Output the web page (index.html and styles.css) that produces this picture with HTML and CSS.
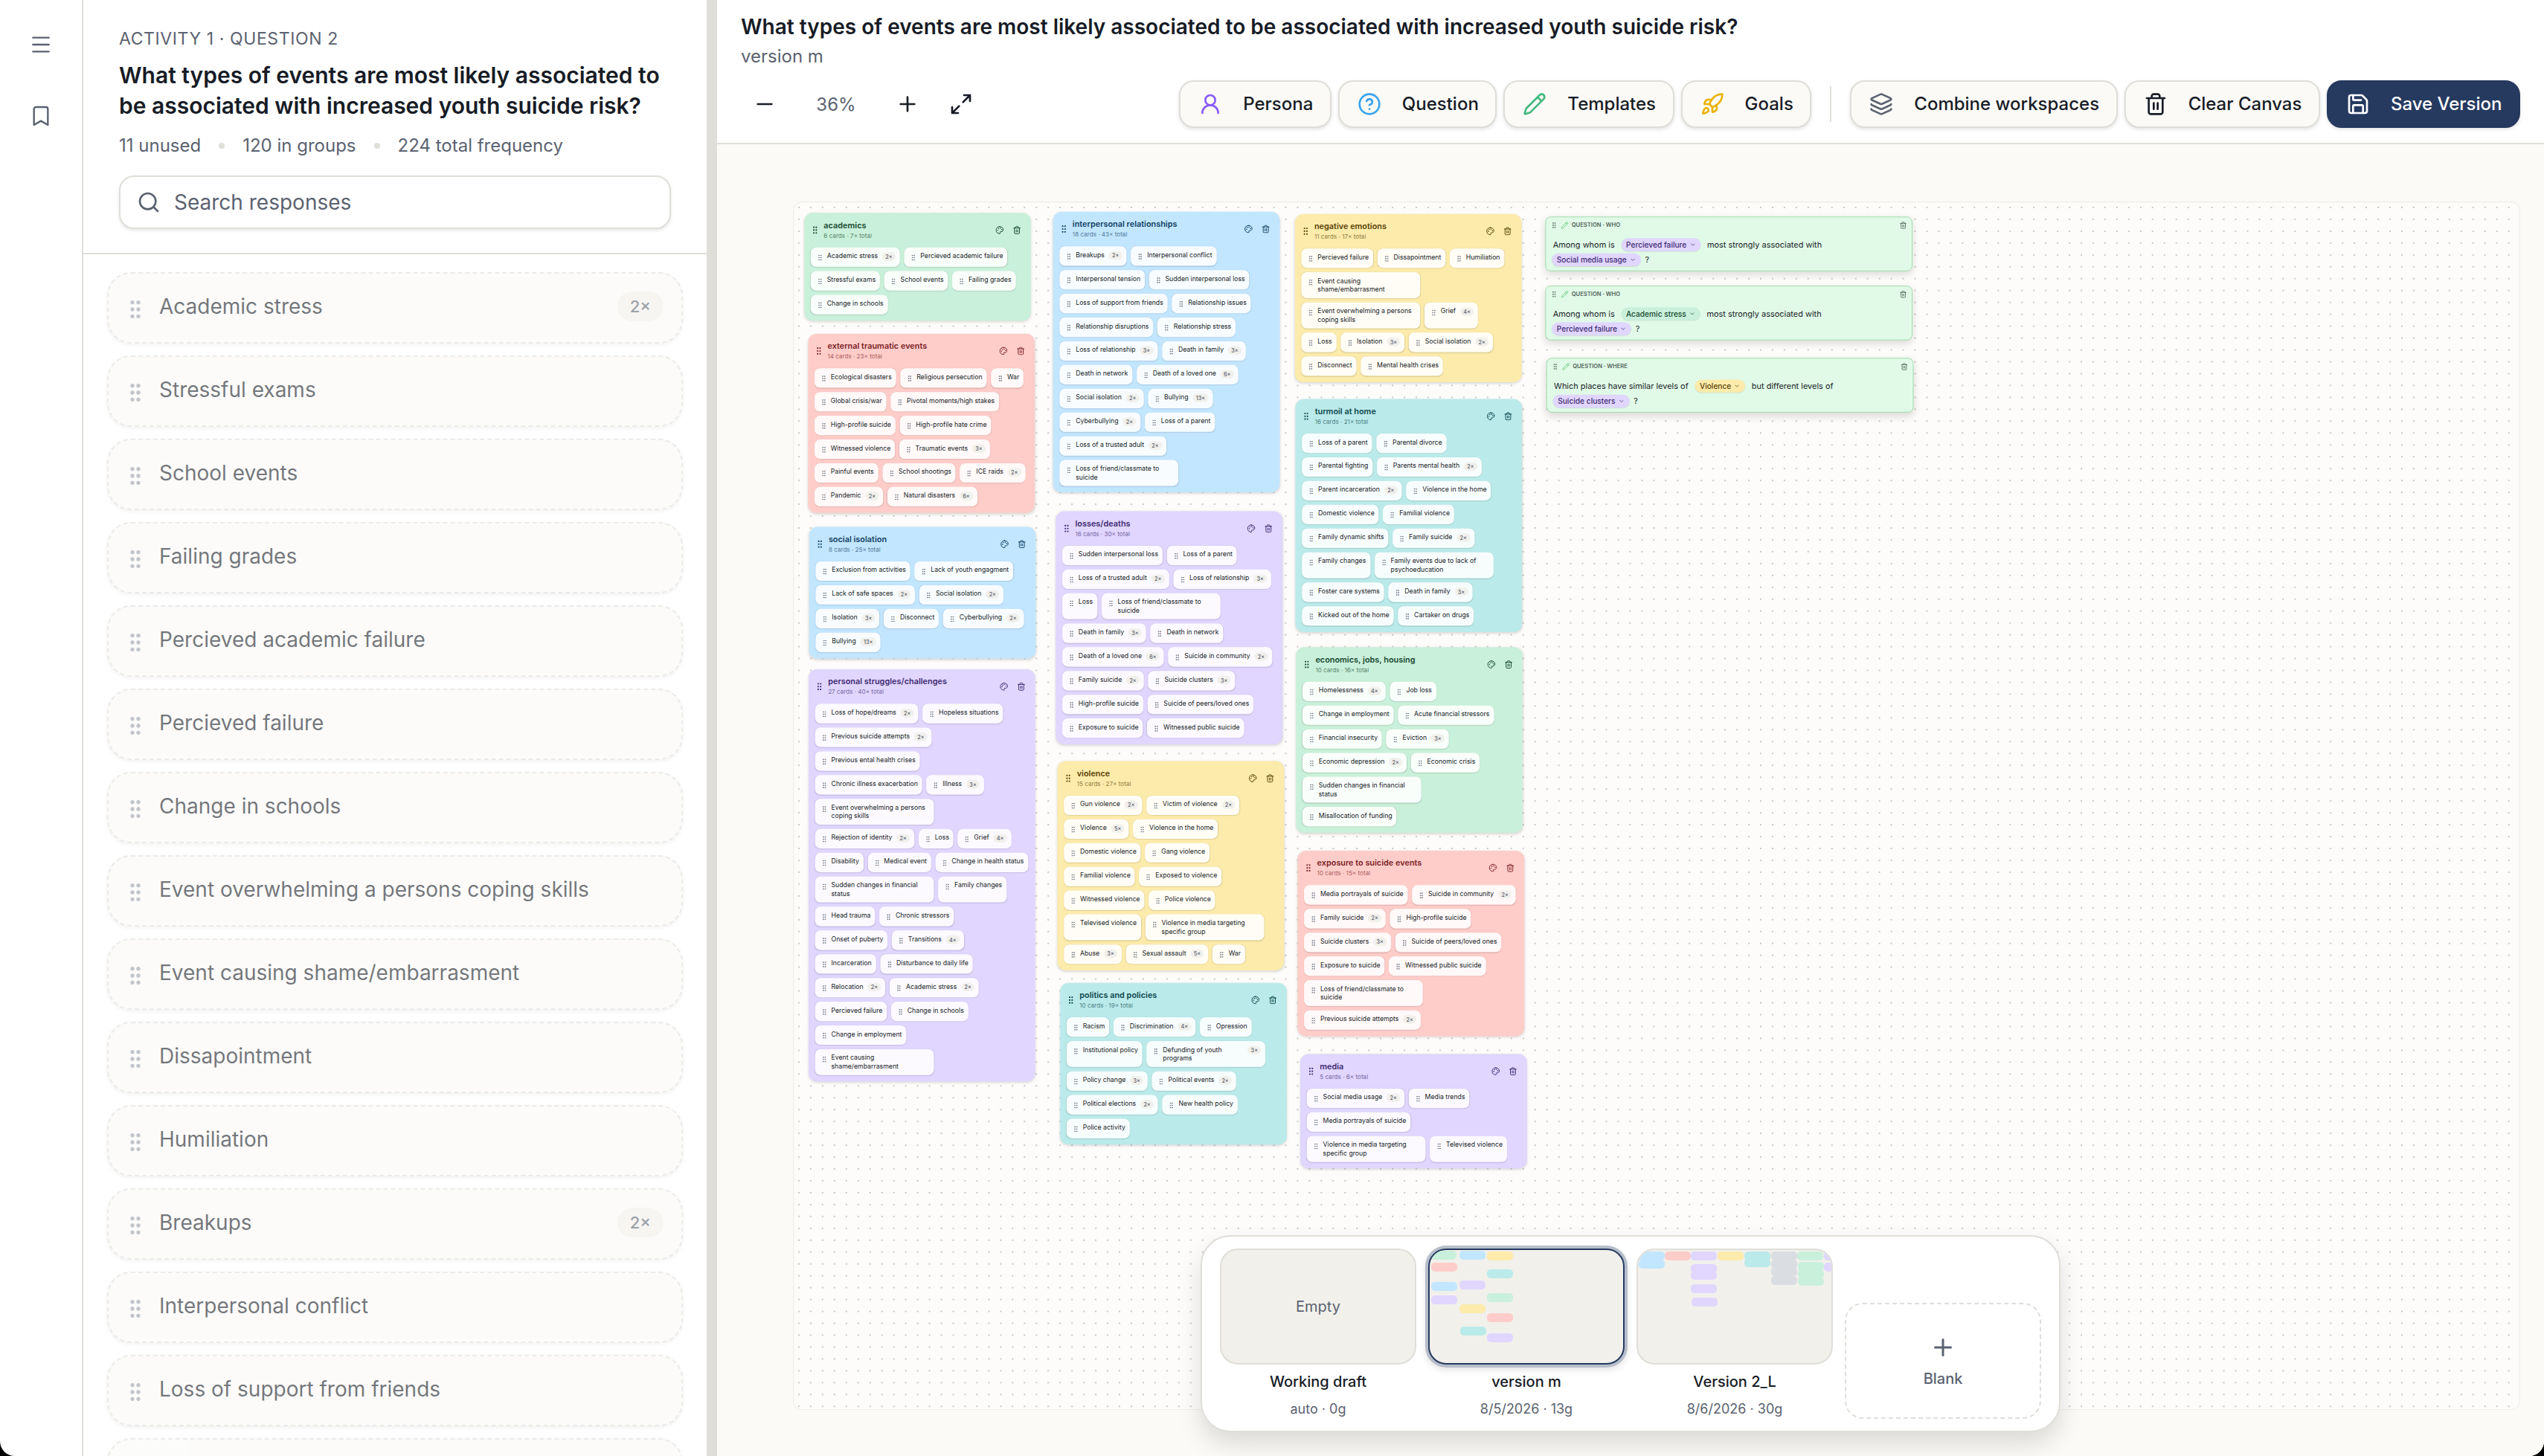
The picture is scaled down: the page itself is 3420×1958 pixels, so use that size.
FILE: index.html
```html
<!DOCTYPE html>
<html lang="en">
<head>
    <meta charset="UTF-8">
    <meta name="viewport" content="width=device-width, initial-scale=1.0">
    <title>Workspace</title>
    <link rel="stylesheet" href="styles.css">
</head>
<body>
    <svg class="sprite">
        <symbol id="menu" viewBox="0 0 24 24"><path d="M4 5h16M4 12h16M4 19h16"/></symbol>
        <symbol id="bookmark" viewBox="0 0 24 24"><path d="m19 21-7-4-7 4V5a2 2 0 0 1 2-2h10a2 2 0 0 1 2 2v16z"/></symbol>
        <symbol id="search" viewBox="0 0 24 24"><circle cx="11" cy="11" r="8"/><path d="m21 21-4.3-4.3"/></symbol>
        <symbol id="grip" viewBox="0 0 24 24"><circle cx="9" cy="5" r="1"/><circle cx="9" cy="12" r="1"/><circle cx="9" cy="19" r="1"/><circle cx="15" cy="5" r="1"/><circle cx="15" cy="12" r="1"/><circle cx="15" cy="19" r="1"/></symbol>
        <symbol id="minus" viewBox="0 0 24 24"><path d="M5 12h14"/></symbol>
        <symbol id="plus" viewBox="0 0 24 24"><path d="M5 12h14M12 5v14"/></symbol>
        <symbol id="expand" viewBox="0 0 24 24"><path d="M15 3h6v6M21 3l-7 7M3 21l7-7M9 21H3v-6"/></symbol>
        <symbol id="user" viewBox="0 0 24 24"><circle cx="12" cy="8" r="5"/><path d="M20 21a8 8 0 0 0-16 0"/></symbol>
        <symbol id="help" viewBox="0 0 24 24"><circle cx="12" cy="12" r="10"/><path d="M9.09 9a3 3 0 0 1 5.83 1c0 2-3 3-3 3M12 17h.01"/></symbol>
        <symbol id="pencil" viewBox="0 0 24 24"><path d="M21.174 6.812a1 1 0 0 0-3.986-3.987L3.842 16.174a2 2 0 0 0-.5.83l-1.321 4.352a.5.5 0 0 0 .623.622l4.353-1.32a2 2 0 0 0 .83-.497zM15 5l4 4"/></symbol>
        <symbol id="rocket" viewBox="0 0 24 24"><path d="M4.5 16.5c-1.5 1.26-2 5-2 5s3.74-.5 5-2c.71-.84.7-2.13-.09-2.91a2.18 2.18 0 0 0-2.91-.09z"/><path d="m12 15-3-3a22 22 0 0 1 2-3.95A12.88 12.88 0 0 1 22 2c0 2.72-.78 7.5-6 11a22.35 22.35 0 0 1-4 2z"/><path d="M9 12H4s.55-3.03 2-4c1.62-1.08 5 0 5 0M12 15v5s3.03-.55 4-2c1.08-1.62 0-5 0-5"/></symbol>
        <symbol id="layers" viewBox="0 0 24 24"><path d="M12.83 2.18a2 2 0 0 0-1.66 0L2.6 6.08a1 1 0 0 0 0 1.83l8.58 3.91a2 2 0 0 0 1.66 0l8.58-3.9a1 1 0 0 0 0-1.83z"/><path d="M2 12a1 1 0 0 0 .58.91l8.6 3.91a2 2 0 0 0 1.65 0l8.58-3.9A1 1 0 0 0 22 12"/><path d="M2 17a1 1 0 0 0 .58.91l8.6 3.91a2 2 0 0 0 1.65 0l8.58-3.9A1 1 0 0 0 22 17"/></symbol>
        <symbol id="trash" viewBox="0 0 24 24"><path d="M3 6h18M19 6v14c0 1-1 2-2 2H7c-1 0-2-1-2-2V6M8 6V4c0-1 1-2 2-2h4c1 0 2 1 2 2v2M10 11v6M14 11v6"/></symbol>
        <symbol id="save" viewBox="0 0 24 24"><path d="M15.2 3a2 2 0 0 1 1.4.6l3.8 3.8a2 2 0 0 1 .6 1.4V19a2 2 0 0 1-2 2H5a2 2 0 0 1-2-2V5a2 2 0 0 1 2-2z"/><path d="M17 21v-7a1 1 0 0 0-1-1H8a1 1 0 0 0-1 1v7M7 3v4a1 1 0 0 0 1 1h7"/></symbol>
        <symbol id="palette" viewBox="0 0 24 24"><circle cx="13.5" cy="6.5" r=".5"/><circle cx="17.5" cy="10.5" r=".5"/><circle cx="8.5" cy="7.5" r=".5"/><circle cx="6.5" cy="12.5" r=".5"/><path d="M12 2C6.5 2 2 6.5 2 12s4.5 10 10 10c.926 0 1.648-.746 1.648-1.688 0-.437-.18-.835-.437-1.125-.29-.289-.438-.652-.438-1.125a1.64 1.64 0 0 1 1.668-1.668h1.996c3.051 0 5.555-2.503 5.555-5.554C21.965 6.012 17.461 2 12 2z"/></symbol>
        <symbol id="chevron" viewBox="0 0 24 24"><path d="m6 9 6 6 6-6"/></symbol>
    </svg>

    <div class="app">
        <nav class="rail">
            <svg class="icon"><use href="#menu"/></svg>
            <svg class="icon"><use href="#bookmark"/></svg>
        </nav>

        <aside class="panel">
            <div class="panel-head">
                <p class="eyebrow">ACTIVITY 1 · QUESTION 2</p>
                <h2>What types of events are most likely associated to be associated with increased youth suicide risk?</h2>
                <p class="stats"><span>11 unused</span><i></i><span>120 in groups</span><i></i><span>224 total frequency</span></p>
                <div class="search"><svg class="icon"><use href="#search"/></svg>Search responses</div>
            </div>
            <div class="responses"></div>
        </aside>
        <div class="divider"></div>

        <main class="main">
            <header class="topbar">
                <h1>What types of events are most likely associated to be associated with increased youth suicide risk?</h1>
                <p class="version">version m</p>
                <div class="toolbar">
                    <div class="zoom">
                        <button><svg class="icon"><use href="#minus"/></svg></button>
                        <span>36%</span>
                        <button><svg class="icon"><use href="#plus"/></svg></button>
                        <button><svg class="icon"><use href="#expand"/></svg></button>
                    </div>
                    <div class="actions">
                        <button class="btn"><svg class="icon violet"><use href="#user"/></svg>Persona</button>
                        <button class="btn"><svg class="icon azure"><use href="#help"/></svg>Question</button>
                        <button class="btn"><svg class="icon emerald"><use href="#pencil"/></svg>Templates</button>
                        <button class="btn"><svg class="icon amber"><use href="#rocket"/></svg>Goals</button>
                        <span class="sep"></span>
                        <button class="btn"><svg class="icon slate"><use href="#layers"/></svg>Combine workspaces</button>
                        <button class="btn"><svg class="icon"><use href="#trash"/></svg>Clear Canvas</button>
                        <button class="btn primary"><svg class="icon"><use href="#save"/></svg>Save Version</button>
                    </div>
                </div>
            </header>

            <section class="canvas">
                <div class="board"></div>
                <div class="dock">
                    <div class="slot">
                        <div class="thumb">Empty</div>
                        <p class="name">Working draft</p>
                        <p class="meta">auto · 0g</p>
                    </div>
                    <div class="slot">
                        <div class="thumb active" id="thumb-m"></div>
                        <p class="name">version m</p>
                        <p class="meta">8/5/2026 · 13g</p>
                    </div>
                    <div class="slot">
                        <div class="thumb" id="thumb-l"></div>
                        <p class="name">Version 2_L</p>
                        <p class="meta">8/6/2026 · 30g</p>
                    </div>
                    <div class="blank"><svg class="icon"><use href="#plus"/></svg>Blank</div>
                </div>
            </section>
        </main>
    </div>
    <script src="script.js"></script>
</body>
</html>
```
FILE: styles.css
```css
* {
    margin: 0;
    padding: 0;
    box-sizing: border-box;
}
body {
    background: #000;
    font-family: Inter, 'Liberation Sans', sans-serif;
    color: #171c26;
    overflow: hidden;
}
.sprite {
    display: none;
}
.icon {
    width: 32px;
    height: 32px;
    fill: none;
    stroke: currentColor;
    stroke-width: 2;
    stroke-linecap: round;
    stroke-linejoin: round;
    flex: none;
}
button {
    font: inherit;
    color: inherit;
    background: none;
    border: 0;
}
.app {
    display: flex;
    width: 3420px;
    height: 1958px;
    background: #fff;
    border-radius: 0 0 20px 20px;
    overflow: hidden;
}

/* left rail */
.rail {
    width: 112px;
    flex: none;
    border-right: 2px solid #dfded9;
    display: flex;
    flex-direction: column;
    align-items: center;
    gap: 64px;
    padding-top: 44px;
    color: #5b6270;
}
.rail .icon {
    stroke-width: 1.8;
}

/* responses panel */
.panel {
    width: 838px;
    flex: none;
    overflow: hidden;
}
.panel-head {
    height: 342px;
    padding: 36px 48px 0;
    border-bottom: 2px solid #dfded9;
}
.eyebrow {
    font-size: 23px;
    line-height: 32px;
    letter-spacing: 0.6px;
    color: #5b6270;
}
.panel h2 {
    font-size: 30px;
    line-height: 41px;
    font-weight: 600;
    margin-top: 13px;
}
.stats {
    display: flex;
    align-items: center;
    gap: 24px;
    font-size: 24px;
    line-height: 32px;
    margin-top: 17px;
    color: #5b6270;
}
.stats i {
    width: 8px;
    height: 8px;
    border-radius: 50%;
    background: #dfded9;
}
.search {
    display: flex;
    align-items: center;
    gap: 18px;
    height: 72px;
    margin-top: 24px;
    padding: 0 22px;
    border: 2px solid #dfded9;
    border-radius: 20px;
    font-size: 28px;
    color: #5b6270;
    box-shadow: 0 2px 4px rgba(0, 0, 0, .1);
}
.responses {
    display: flex;
    flex-direction: column;
    gap: 16px;
    padding: 24px 32px 0;
}
.response {
    display: flex;
    align-items: center;
    height: 96px;
    flex: none;
    padding: 0 24px 0 20px;
    border: 2px dashed #dfded9;
    border-radius: 32px;
    background: #fbfaf7;
    font-size: 28px;
    opacity: .6;
    box-shadow: 0 2px 4px rgba(0, 0, 0, .08);
}
.response .icon {
    margin: 4px 16px 0 0;
    color: #9a9fa8;
}
.response span {
    flex: 1;
    margin-top: -4px;
}
.response b {
    padding: 0 17px;
    height: 40px;
    line-height: 40px;
    border-radius: 20px;
    background: #f1f0eb;
    color: #5b6270;
    font-size: 22px;
    font-weight: 500;
    margin-top: -4px;
}
.divider {
    width: 14px;
    flex: none;
    background: #dfded9;
}

/* top bar */
.main {
    flex: 1;
    min-width: 0;
    display: flex;
    flex-direction: column;
}
.topbar {
    height: 194px;
    padding: 16px 32px 0;
    border-bottom: 2px solid #dfded9;
}
.topbar h1 {
    font-size: 28px;
    line-height: 40px;
    font-weight: 600;
}
.version {
    font-size: 24px;
    line-height: 32px;
    margin-top: 4px;
    color: #5b6270;
}
.toolbar {
    display: flex;
    justify-content: space-between;
    margin-top: 16px;
}
.zoom {
    display: flex;
    align-items: center;
    font-size: 24px;
    color: #5b6270;
}
.zoom button {
    width: 64px;
    height: 64px;
    display: grid;
    place-items: center;
    color: #171c26;
}
.zoom span {
    width: 128px;
    text-align: center;
}
.zoom button:last-child {
    margin-left: 8px;
}
.actions {
    display: flex;
    gap: 9px;
}
.btn {
    display: flex;
    align-items: center;
    gap: 28px;
    height: 64px;
    padding: 0 22.5px 1px 24px;
    border: 2px solid #dfded9;
    border-radius: 20px;
    background: #fbfaf7;
    font-size: 24px;
    font-weight: 500;
    white-space: nowrap;
    box-shadow: 0 2px 5px rgba(0, 0, 0, .12);
}
.btn.primary {
    background: #263a60;
    border-color: #263a60;
    color: #fff;
}
.violet { color: #8b5cf6; }
.azure { color: #38a3ec; }
.emerald { color: #43b97f; }
.amber { color: #eab308; }
.slate { color: #5b6270; }
.sep {
    width: 2px;
    height: 48px;
    margin: 8px 16px;
    background: #dfded9;
}

/* canvas */
.canvas {
    flex: 1;
    position: relative;
    background: #fbfaf7;
    padding: 77px 0 0 102px;
    overflow: hidden;
}
.board {
    position: relative;
    width: 3200px;
    height: 2240px;
    transform: scale(.7256);
    transform-origin: 0 0;
    border-radius: 16px;
    background: #fdfcfa radial-gradient(circle, #cac9c6 1.3px, transparent 1.8px) 0 0 / 22px 22px;
    box-shadow: inset 0 0 0 2px #f0efeb;
}
.group {
    position: absolute;
    width: 420px;
    padding: 12px;
    border-radius: 16px;
    box-shadow: 0 2px 5px rgba(0, 0, 0, .14);
}
.group-head {
    display: flex;
    align-items: center;
    height: 52px;
    padding: 0 6px 12px 0;
}
.group-head .icon {
    width: 16px;
    height: 16px;
    margin-left: 16px;
}
.group-head .grip {
    width: 18px;
    height: 18px;
    margin: 0 7px 0 -1px;
}
.group-head div {
    flex: 1;
}
.group h3 {
    font-size: 15px;
    line-height: 20px;
    font-weight: 600;
}
.group-head p {
    font-size: 11.2px;
    line-height: 19px;
    opacity: .65;
}
.chips {
    display: flex;
    flex-wrap: wrap;
    gap: 8px;
}
.chip {
    display: flex;
    align-items: flex-start;
    min-height: 36px;
    max-width: 220px;
    padding: 7.5px 8px 7.5px 10px;
    border-radius: 10px;
    background: rgba(255, 255, 255, .88);
    color: #171c26;
    font-size: 12px;
    line-height: 16.5px;
    box-shadow: 0 1px 2px rgba(0, 0, 0, .12);
}
.chip .icon {
    width: 14px;
    height: 14px;
    margin: 4.5px 6px 0 0;
    color: #6b7280;
}
.chip span {
    flex: 1;
}
.chip b {
    margin: 1px 0 0 8px;
    padding: 0 6px;
    border-radius: 8px;
    background: #f1f0eb;
    color: #5b6270;
    font-size: 10px;
    line-height: 16px;
    font-weight: 500;
}
.green { background: #c9f0da; color: #17492f; }
.red { background: #ffcdc9; color: #7a2226; }
.blue { background: #c2e6ff; color: #113f63; }
.purple { background: #e0d6ff; color: #3e2a70; }
.yellow { background: #fcebab; color: #5a4207; }
.teal { background: #bbeaea; color: #0c484c; }
.gray { background: #dadde2; }

.question {
    position: absolute;
    width: 680px;
    height: 101px;
    padding: 4.5px 11px;
    border: 1.5px solid #86d595;
    border-radius: 10px;
    background: #e1fae7;
    box-shadow: 0 6px 14px rgba(0, 0, 0, .14);
}
.question-head {
    display: flex;
    align-items: center;
    height: 21px;
    font-size: 10.5px;
    font-weight: 600;
    color: #51645a;
}
.question-head .icon {
    width: 14px;
    height: 14px;
}
.question-head .pencil {
    margin: 0 5.5px 0 6.5px;
    color: #5cc274;
}
.question-head .grip {
    margin-left: -3.5px;
}
.question-head span {
    flex: 1;
}
.question-head .trash {
    margin-right: -2px;
}
.question-text {
    display: flex;
    flex-wrap: wrap;
    align-items: center;
    margin-top: 14.3px;
    padding-left: 2px;
    row-gap: 1.8px;
    font-size: 15.1px;
    line-height: 24px;
}
.pill {
    display: flex;
    align-items: center;
    gap: 5px;
    height: 24px;
    margin: 0 12px;
    padding: 0 9px;
    border-radius: 12px;
    font-weight: 500;
    font-size: 14px;
    box-shadow: 0 1px 2px rgba(0, 0, 0, .12);
}
.pill.last {
    margin: 0 8px 0 -2px;
}
.pill .icon {
    width: 12px;
    height: 12px;
}
.break {
    width: 100%;
}

/* saved versions */
.dock {
    position: absolute;
    left: 650px;
    top: 1467px;
    display: flex;
    align-items: flex-end;
    gap: 16px;
    height: 265px;
    padding: 16px 24px;
    background: #fff;
    border: 2px solid #dfded9;
    border-radius: 40px;
    box-shadow: 0 16px 32px rgba(0, 0, 0, .13);
}
.slot {
    width: 264px;
    height: 229px;
    text-align: center;
}
.thumb {
    position: relative;
    height: 156px;
    line-height: 152px;
    border: 2px solid #dfded9;
    border-radius: 24px;
    background: #f1f0eb;
    color: #5b6270;
    font-size: 20px;
    overflow: hidden;
}
.thumb.active {
    border-color: #263a60;
    box-shadow: 0 0 0 4px #b7bdca, 0 4px 10px 4px rgba(0, 0, 0, .1);
}
.thumb i {
    position: absolute;
    width: 35px;
    height: 12px;
    border-radius: 5px;
}
.name {
    font-size: 20px;
    line-height: 28px;
    font-weight: 500;
    margin-top: 9px;
}
.meta {
    font-size: 18px;
    line-height: 24px;
    margin-top: 11px;
    color: #5b6270;
}
.blank {
    width: 264px;
    height: 156px;
    display: flex;
    flex-direction: column;
    align-items: center;
    justify-content: center;
    gap: 12px;
    border: 2px dashed #dfded9;
    border-radius: 24px;
    font-size: 20px;
    font-weight: 500;
    color: #5b6270;
}
.blank .icon {
    width: 36px;
    height: 36px;
}
```
FILE: script.js
```javascript
const responses = [
    "Academic stress|2", "Stressful exams", "School events", "Failing grades",
    "Percieved academic failure", "Percieved failure", "Change in schools",
    "Event overwhelming a persons coping skills", "Event causing shame/embarrasment",
    "Dissapointment", "Humiliation", "Breakups|2", "Interpersonal conflict",
    "Loss of support from friends", ""
];

// x and y are canvas coordinates
const groups = [
    { x: 21, y: 21, color: "green", title: "academics", meta: "6 cards · 7× total",
      cards: ["Academic stress|2", "Percieved academic failure", "Stressful exams", "School events", "Failing grades", "Change in schools"] },
    { x: 28, y: 245, color: "red", title: "external traumatic events", meta: "14 cards · 23× total",
      cards: ["Ecological disasters", "Religious persecution", "War", "Global crisis/war", "Pivotal moments/high stakes", "High-profile suicide", "High-profile hate crime", "Witnessed violence", "Traumatic events|3", "Painful events", "School shootings", "ICE raids|2", "Pandemic|2", "Natural disasters|6"] },
    { x: 30, y: 603, color: "blue", title: "social isolation", meta: "8 cards · 25× total",
      cards: ["Exclusion from activities", "Lack of youth engagment", "Lack of safe spaces|2", "Social isolation|2", "Isolation|3", "Disconnect", "Cyberbullying|2", "Bullying|13"] },
    { x: 29, y: 867, color: "purple", title: "personal struggles/challenges", meta: "27 cards · 40× total",
      cards: ["Loss of hope/dreams|2", "Hopeless situations", "Previous suicide attempts|2", "Previous ental health crises", "Chronic illness exacerbation", "Illness|3", "Event overwhelming a persons coping skills", "Rejection of identity|2", "Loss", "Grief|4", "Disability", "Medical event", "Change in health status", "Sudden changes in financial status", "Family changes", "Head trauma", "Chronic stressors", "Onset of puberty", "Transitions|4", "Incarceration", "Disturbance to daily life", "Relocation|2", "Academic stress|2", "Percieved failure", "Change in schools", "Change in employment", "Event causing shame/embarrasment"] },
    { x: 482, y: 19, color: "blue", title: "interpersonal relationships", meta: "18 cards · 43× total",
      cards: ["Breakups|2", "Interpersonal conflict", "Interpersonal tension", "Sudden interpersonal loss", "Loss of support from friends", "Relationship issues", "Relationship disruptions", "Relationship stress", "Loss of relationship|3", "Death in family|3", "Death in network", "Death of a loved one|6", "Social isolation|2", "Bullying|13", "Cyberbullying|2", "Loss of a parent", "Loss of a trusted adult|2", "Loss of friend/classmate to suicide"] },
    { x: 487, y: 574, color: "purple", title: "losses/deaths", meta: "16 cards · 30× total",
      cards: ["Sudden interpersonal loss", "Loss of a parent", "Loss of a trusted adult|2", "Loss of relationship|3", "Loss", "Loss of friend/classmate to suicide", "Death in family|3", "Death in network", "Death of a loved one|6", "Suicide in community|2", "Family suicide|2", "Suicide clusters|3", "High-profile suicide", "Suicide of peers/loved ones", "Exposure to suicide", "Witnessed public suicide"] },
    { x: 490, y: 1037, color: "yellow", title: "violence", meta: "15 cards · 27× total",
      cards: ["Gun violence|2", "Victim of violence|2", "Violence|5", "Violence in the home", "Domestic violence", "Gang violence", "Familial violence", "Exposed to violence", "Witnessed violence", "Police violence", "Televised violence", "Violence in media targeting specific group", "Abuse|3", "Sexual assault|5", "War"] },
    { x: 495, y: 1448, color: "teal", title: "politics and policies", meta: "10 cards · 19× total",
      cards: ["Racism", "Discrimination|4", "Opression", "Institutional policy", "Defunding of youth programs|3", "Policy change|3", "Political events|2", "Political elections|2", "New health policy", "Police activity"] },
    { x: 930, y: 23, color: "yellow", title: "negative emotions", meta: "11 cards · 17× total",
      cards: ["Percieved failure", "Dissapointment", "Humiliation", "Event causing shame/embarrasment", "Event overwhelming a persons coping skills", "Grief|4", "Loss", "Isolation|3", "Social isolation|2", "Disconnect", "Mental health crises"] },
    { x: 931, y: 366, color: "teal", title: "turmoil at home", meta: "16 cards · 21× total",
      cards: ["Loss of a parent", "Parental divorce", "Parental fighting", "Parents mental health|2", "Parent incarceration|2", "Violence in the home", "Domestic violence", "Familial violence", "Family dynamic shifts", "Family suicide|2", "Family changes", "Family events due to lack of psychoeducation", "Foster care systems", "Death in family|3", "Kicked out of the home", "Cartaker on drugs"] },
    { x: 932, y: 826, color: "green", title: "economics, jobs, housing", meta: "10 cards · 16× total",
      cards: ["Homelessness|4", "Job loss", "Change in employment", "Acute financial stressors", "Financial insecurity", "Eviction|3", "Economic depression|2", "Economic crisis", "Sudden changes in financial status", "Misallocation of funding"] },
    { x: 935, y: 1203, color: "red", title: "exposure to suicide events", meta: "10 cards · 15× total",
      cards: ["Media portrayals of suicide", "Suicide in community|2", "Family suicide|2", "High-profile suicide", "Suicide clusters|3", "Suicide of peers/loved ones", "Exposure to suicide", "Witnessed public suicide", "Loss of friend/classmate to suicide", "Previous suicide attempts|2"] },
    { x: 940, y: 1580, color: "purple", title: "media", meta: "5 cards · 6× total",
      cards: ["Social media usage|2", "Media trends", "Media portrayals of suicide", "Violence in media targeting specific group", "Televised violence"] }
];

const questions = [
    { x: 1394, y: 27.5, kind: "WHO", a: "Among whom is", p: "Percieved failure", pc: "purple", b: "most strongly associated with", q: "Social media usage" },
    { x: 1394, y: 155.5, kind: "WHO", a: "Among whom is", p: "Academic stress", pc: "green", b: "most strongly associated with", q: "Percieved failure" },
    { x: 1396, y: 289.5, kind: "WHERE", a: "Which places have similar levels of", p: "Violence", pc: "yellow", b: "but different levels of", q: "Suicide clusters" }
];

const thumbM = [
    ["green", 1, 1], ["blue", 40, 1], ["yellow", 77, 2], ["red", 2, 17], ["teal", 77, 26],
    ["blue", 2, 43], ["purple", 40, 41], ["purple", 2, 61], ["green", 77, 58], ["yellow", 40, 73],
    ["red", 77, 85], ["teal", 41, 103], ["purple", 77, 112]
];
const thumbL = [
    ["blue", 1, 2], ["blue", 1, 13], ["red", 36, 2], ["purple", 71, 2], ["yellow", 107, 2],
    ["teal", 143, 2], ["teal", 143, 11], ["gray", 179, 2], ["gray", 179, 13], ["gray", 179, 23],
    ["gray", 179, 35], ["green", 214, 2], ["green", 215, 16], ["green", 215, 26], ["green", 215, 36],
    ["purple", 250, 2], ["purple", 250, 17], ["purple", 71, 19], ["purple", 71, 28],
    ["purple", 71, 46], ["purple", 72, 64]
];

const icon = (name) => `<svg class="icon ${name}"><use href="#${name}"/></svg>`;

function card(text, className) {
    const [label, count] = text.split("|");
    return `<div class="${className}">${icon("grip")}<span>${label}</span>${count ? `<b>${count}×</b>` : ""}</div>`;
}

document.querySelector(".responses").innerHTML = responses.map((r) => card(r, "response")).join("");

document.querySelector(".board").innerHTML = groups.map((g) => `
    <div class="group ${g.color}" style="left:${g.x}px;top:${g.y}px">
        <div class="group-head">${icon("grip")}<div><h3>${g.title}</h3><p>${g.meta}</p></div>${icon("palette")}${icon("trash")}</div>
        <div class="chips">${g.cards.map((c) => card(c, "chip")).join("")}</div>
    </div>`).join("") + questions.map((q) => `
    <div class="question" style="left:${q.x}px;top:${q.y}px">
        <div class="question-head">${icon("grip")}${icon("pencil")}<span>QUESTION · ${q.kind}</span>${icon("trash")}</div>
        <div class="question-text">
            ${q.a}<div class="pill ${q.pc}">${q.p}${icon("chevron")}</div>${q.b}
            <div class="break"></div>
            <div class="pill last purple">${q.q}${icon("chevron")}</div>?
        </div>
    </div>`).join("");

function fillThumb(id, blocks) {
    document.getElementById(id).innerHTML = blocks
        .map(([color, x, y]) => `<i class="${color}" style="left:${x}px;top:${y}px"></i>`).join("");
}
fillThumb("thumb-m", thumbM);
fillThumb("thumb-l", thumbL);
```
